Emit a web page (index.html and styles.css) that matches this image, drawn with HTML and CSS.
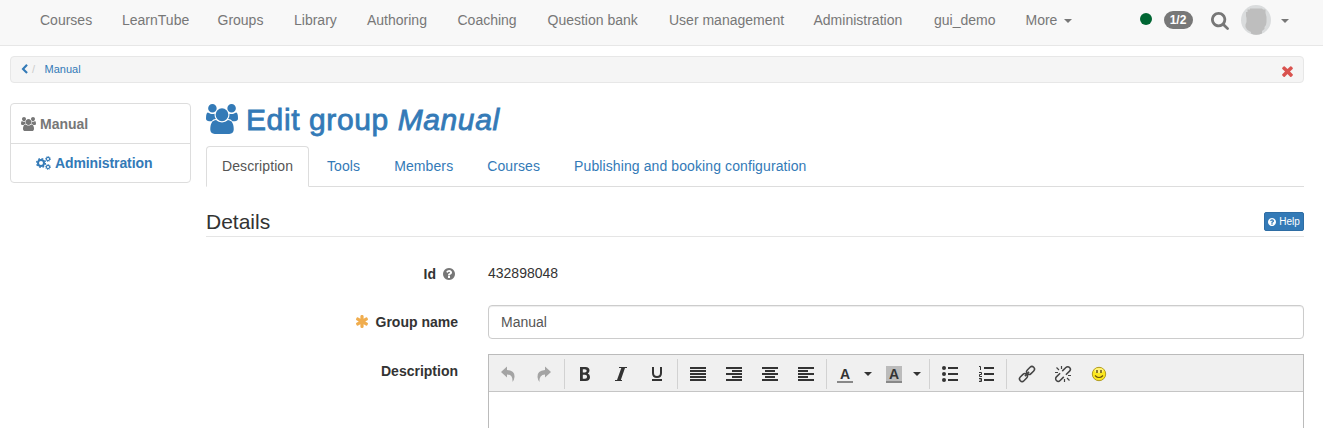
FILE: index.html
```html
<!DOCTYPE html>
<html lang="en">
<head>
<meta charset="utf-8">
<title>Edit group Manual</title>
<link rel="stylesheet" href="styles.css">
</head>
<body>
<svg class="defs" width="0" height="0">
  <symbol id="users" viewBox="0 0 1920 1792"><path d="M593 896q-162 5-265 128h-134q-82 0-138-40.5t-56-118.5q0-353 124-353 6 0 43.500 21t97.500 42.500 119 21.500q67 0 133-23-5 37-5 66 0 139 81 256zm1071 637q0 120-73 189.500t-194 69.500h-874q-121 0-194-69.500t-73-189.500q0-53 3.500-103.500t14-109 26.500-108.500 43-97.500 62-81 85.500-53.500 111.500-20q10 0 43 21.500t73 48 107 48 135 21.500 135-21.500 107-48 73-48 43-21.500q61 0 111.500 20t85.500 53.500 62 81 43 97.500 26.500 108.500 14 109 3.500 103.500zm-1024-1277q0 106-75 181t-181 75-181-75-75-181 75-181 181-75 181 75 75 181zm704 384q0 159-112.500 271.500t-271.500 112.500-271.500-112.500-112.500-271.500 112.500-271.500 271.500-112.500 271.500 112.500 112.500 271.500zm576 225q0 78-56 118.500t-138 40.500h-134q-103-123-265-128 81-117 81-256 0-29-5-66 66 23 133 23 59 0 119-21.500t97.500-42.500 43.500-21q124 0 124 353zm-128-609q0 106-75 181t-181 75-181-75-75-181 75-181 181-75 181 75 75 181z"/></symbol>
  <symbol id="question" viewBox="128 128 1536 1536"><path d="M1024 1376v-192q0-14-9-23t-23-9h-192q-14 0-23 9t-9 23v192q0 14 9 23t23 9h192q14 0 23-9t9-23zm256-672q0-88-55.500-163t-138.500-116-170-41q-243 0-371 213-15 24 8 42l132 100q7 6 19 6 16 0 25-12 53-68 86-92 34-24 86-24 48 0 85.500 26t37.500 59q0 38-20 61t-68 45q-63 28-115.500 86.500t-52.500 125.500v36q0 14 9 23t23 9h192q14 0 23-9t9-23q0-19 21.500-49.500t54.500-49.500q32-18 49-28.500t46-35 44.500-48 28-60.500 12.500-81zm384 192q0 209-103 385.500t-279.500 279.500-385.500 103-385.500-103-279.500-279.500-103-385.500 103-385.500 279.500-279.500 385.500-103 385.500 103 279.500 279.500 103 385.500z"/></symbol>
</svg>

<nav class="navbar">
  <div class="nav-main">
    <a>Courses</a><a>LearnTube</a><a>Groups</a><a>Library</a><a>Authoring</a><a>Coaching</a><a>Question bank</a><a>User management</a><a>Administration</a><a>gui_demo</a><a>More<i class="caret"></i></a>
  </div>
  <div class="nav-user">
    <span class="status"></span>
    <span class="badge">1/2</span>
    <svg class="search" viewBox="64 128 1664 1664"><path d="M1216 832q0-185-131.500-316.500t-316.500-131.500-316.500 131.500-131.500 316.500 131.500 316.500 316.500 131.500 316.500-131.500 131.500-316.500zm512 832q0 52-38 90t-90 38q-54 0-90-38l-343-342q-179 124-399 124-143 0-273.500-55.500t-225-150-150-225-55.500-273.500 55.500-273.500 150-225 225-150 273.500-55.500 273.500 55.500 225 150 150 225 55.500 273.500q0 220-124 399l343 343q37 37 37 90z"/></svg>
    <svg class="avatar" viewBox="0 0 30 30"><circle cx="15" cy="15" r="15" fill="#dadcdd"/><path d="M6.500 4.500H9V3.500H21L22 4.500H24.500V8L25.500 12V17L25 20L23.500 22V24L21 26V28.500Q15 31 10 28.500V27L8 26L6 24.500L4.500 22V19.500L5.500 17V13L5 11V7H6.500Z" fill="#bebebe"/></svg>
    <i class="caret"></i>
  </div>
</nav>

<div class="breadcrumb">
  <svg class="back" viewBox="300 0 1200 1700"><path d="M1427 301l-531 531 531 531q19 19 19 45t-19 45l-166 166q-19 19-45 19t-45-19l-742-742q-19-19-19-45t19-45l742-742q19-19 45-19t45 19l166 166q19 19 19 45t-19 45z"/></svg>
  <span class="slash">/</span>
  <a>Manual</a>
  <svg class="close" viewBox="302 238 1188 1316"><path d="M1490 1322q0 40-28 68l-136 136q-28 28-68 28t-68-28l-294-294-294 294q-28 28-68 28t-68-28l-136-136q-28-28-28-68t28-68l294-294-294-294q-28-28-28-68t28-68l136-136q28-28 68-28t68 28l294 294 294-294q28-28 68-28t68 28l136 136q28 28 28 68t-28 68l-294 294 294 294q28 28 28 68z"/></svg>
</div>

<div class="columns">
  <aside class="menu">
    <div class="menu-root"><svg class="menu-icon"><use href="#users"/></svg>Manual</div>
    <div class="menu-child">
      <svg class="menu-icon" viewBox="0 0 15 14"><g fill="none" stroke="currentColor"><circle cx="5" cy="7" r="3" stroke-width="2"/><circle cx="5" cy="7" r="4.400" stroke-width="1.400" stroke-dasharray="1.770 1.686"/><circle cx="12" cy="3" r="1.600" stroke-width="1.100"/><circle cx="12" cy="3" r="2.500" stroke-width=".9" stroke-dasharray="1 .963"/><circle cx="12" cy="11" r="1.600" stroke-width="1.100"/><circle cx="12" cy="11" r="2.500" stroke-width=".9" stroke-dasharray="1 .963"/></g></svg>Administration
    </div>
  </aside>

  <main>
    <h1><svg class="title-icon"><use href="#users"/></svg><span>Edit group <em>Manual</em></span></h1>
    <div class="tabs">
      <a class="tab active">Description</a><a class="tab">Tools</a><a class="tab">Members</a><a class="tab">Courses</a><a class="tab">Publishing and booking configuration</a>
    </div>
    <div class="legend"><h2>Details</h2><a class="help"><svg><use href="#question"/></svg>Help</a></div>

    <div class="row id-row"><label>Id<svg class="hint"><use href="#question"/></svg></label><span class="value">432898048</span></div>
    <div class="row name-row"><label><svg class="required" viewBox="180 128 1432 1536"><path d="M1546 1050q46 26 59.500 77.500t-12.500 97.500l-64 110q-26 46-77.500 59.500t-97.500-12.500l-266-153v307q0 52-38 90t-90 38h-128q-52 0-90-38t-38-90v-307l-266 153q-46 26-97.500 12.500t-77.500-59.500l-64-110q-26-46-12.500-97.500t59.500-77.500l266-154-266-154q-46-26-59.500-77.500t12.500-97.500l64-110q26-46 77.500-59.500t97.500 12.500l266 153v-307q0-52 38-90t90-38h128q52 0 90 38t38 90v307l266-153q46-26 97.500-12.500t77.500 59.500l64 110q26 46 12.500 97.500t-59.500 77.500l-266 154z"/></svg>Group name</label><div class="input">Manual</div></div>
    <div class="row desc-row"><label>Description</label>
      <div class="editor">
        <div class="toolbar">
          <div class="group">
            <svg class="tool off" viewBox="0 0 16 16"><path d="M1 6L7 .5V4Q15 4.500 14.500 11Q14.300 13.500 12.500 16Q13 8.500 7 8.500V11.500Z"/></svg>
            <svg class="tool off" viewBox="0 0 16 16"><path d="M15 6L9 .5V4Q1 4.500 1.500 11Q1.700 13.500 3.500 16Q3 8.500 9 8.500V11.500Z"/></svg>
          </div>
          <div class="group">
            <svg class="tool" viewBox="0 0 16 16"><path fill-rule="evenodd" d="M3 1H8.500Q12.500 1 12.500 4.500Q12.500 6.700 10.700 7.500Q13 8.300 13 11Q13 15 8.500 15H3ZM5.800 3.300V6.500H7.800Q9.700 6.500 9.700 4.800Q9.700 3.300 7.800 3.300ZM5.800 8.700V12.700H8Q10.100 12.700 10.100 10.700Q10.100 8.700 8 8.700Z"/></svg>
            <svg class="tool" viewBox="0 0 16 16"><path d="M6 1H14V2H12L7.800 14H9V15H2V14H4L8.300 2H6Z"/></svg>
            <svg class="tool" viewBox="0 0 16 16"><path d="M3 1H5V7Q5 10 8 10T11 7V1H13V7Q13 12 8 12T3 7ZM3 13H13V15H3Z"/></svg>
          </div>
          <div class="group">
            <svg class="tool" viewBox="0 0 16 16"><path d="M0 1H16V3H0ZM0 4H16V6H0ZM0 7H16V9H0ZM0 10H16V12H0ZM0 13H16V15H0Z"/></svg>
            <svg class="tool" viewBox="0 0 16 16"><path d="M0 1H16V3H0ZM6 4H16V6H6ZM0 7H16V9H0ZM6 10H16V12H6ZM0 13H16V15H0Z"/></svg>
            <svg class="tool" viewBox="0 0 16 16"><path d="M0 1H16V3H0ZM3 4H13V6H3ZM0 7H16V9H0ZM3 10H13V12H3ZM0 13H16V15H0Z"/></svg>
            <svg class="tool" viewBox="0 0 16 16"><path d="M0 1H16V3H0ZM0 4H10V6H0ZM0 7H16V9H0ZM0 10H10V12H0ZM0 13H16V15H0Z"/></svg>
          </div>
          <div class="group colors">
            <span class="color">A</span><i class="caret"></i><span class="color filled">A</span><i class="caret"></i>
          </div>
          <div class="group">
            <svg class="tool" viewBox="0 0 16 16"><circle cx="2" cy="2" r="2"/><circle cx="2" cy="8" r="2"/><circle cx="2" cy="14" r="2"/><path d="M6 1H16V3H6ZM6 7H16V9H6ZM6 13H16V15H6Z"/></svg>
            <svg class="tool" viewBox="0 0 16 16"><path d="M6 1H16V3H6ZM6 7H16V9H6ZM6 13H16V15H6Z"/><path fill="none" stroke="currentColor" d="M1 .500H2.500V4M1 6.500H3.500V8.500H1.500V10.500H4M1 12.500H3.500V15.500H1M1.500 14H3.500"/></svg>
          </div>
          <div class="group last">
            <svg class="tool" viewBox="0 0 16 16"><g class="link" transform="rotate(-45 8 8)"><rect x="-1.500" y="5.400" width="9" height="5.200" rx="2.600"/><rect x="8.500" y="5.400" width="9" height="5.200" rx="2.600"/><path d="M5 8H11"/></g></svg>
            <svg class="tool" viewBox="0 0 16 16"><g class="link"><g transform="rotate(-45 8 8)"><path d="M6.500 5.400H1.300A2.600 2.600 0 0 0 1.300 10.600H6.500M9.500 5.400H14.700A2.600 2.600 0 0 1 14.700 10.600H9.500"/></g><path stroke-width="1.200" d="M6.500 0V3M1.500 1.500L4 4M0 6.500H3M9.500 13V16M12 12L14.500 14.500M13 9.500H16"/></g></svg>
            <svg class="tool" viewBox="0 0 16 16"><circle cx="8" cy="8" r="6.700" fill="#fbe720" stroke="#b09a20"/><ellipse cx="8" cy="4.500" rx="4.500" ry="2.500" fill="#fff27a"/><path d="M6 4V7M10 4V7" stroke="#4e3b0b" stroke-width="1.300"/><path d="M4 9.500Q8 13.500 12 9.500" fill="none" stroke="#69500d" stroke-width="1.100"/></svg>
          </div>
        </div>
      </div>
    </div>
  </main>
</div>
</body>
</html>
```
FILE: styles.css
```css
* { box-sizing: border-box; }
body { margin: 0; height: 428px; overflow: hidden; background: #fff; color: #333; font: 14px/20px "Liberation Sans", Arial, sans-serif; }
svg { display: block; flex: none; fill: currentColor; }
.defs { display: none; }
.caret { display: inline-block; width: 0; height: 0; border: 4px solid transparent; border-top-color: currentColor; border-bottom: 0; }

.navbar { display: flex; height: 46px; padding: 10px 0 0 40px; background: #f8f8f8; border-bottom: 1px solid #e7e7e7; color: #777; }
.nav-main { display: grid; grid-template-columns: 82px 95.5px 76.5px 73px 90.5px 90px 121.5px 144.5px 120.5px 91.5px 60px; white-space: nowrap; }
.nav-main .caret { margin-left: 7px; vertical-align: 2px; }
.nav-user { display: flex; align-items: center; height: 20px; margin-left: 54px; }
.status { width: 12px; height: 12px; margin-top: -2px; border-radius: 50%; background: #063; }
.badge { width: 29px; height: 18px; margin-left: 12px; border-radius: 9px; background: #777; color: #fff; font-size: 12px; font-weight: bold; line-height: 18px; text-align: center; }
.search { width: 18px; height: 18px; margin-left: 18px; margin-top: 1px; }
.avatar { width: 30px; height: 30px; margin-left: 12px; }
.nav-user .caret { margin-left: 10px; margin-top: 1px; }

.breadcrumb { display: flex; height: 27px; width: 1294px; margin: 10px 0 20px 10px; padding: 0 10px; border: 1px solid #e7e7e7; border-radius: 4px; background: #f5f5f5; color: #337ab7; font-size: 11px; line-height: 25px; }
.back { width: 7px; height: 10px; margin-top: 7px; }
.slash { width: 3px; margin-left: 4px; color: #ccc; }
.breadcrumb a { margin-left: 9.5px; }
.close { width: 11px; height: 12px; margin: 8px 0 0 auto; color: #d9534f; }

.columns { display: flex; align-items: flex-start; gap: 15px; margin-left: 10px; }
.menu { width: 181px; height: 80px; border: 1px solid #ddd; border-radius: 4px; font-weight: bold; }
.menu-root, .menu-child { display: flex; align-items: center; gap: 4px; height: 40px; padding-left: 10px; color: #777; }
.menu-root { border-bottom: 1px solid #ddd; padding-top: 1px; }
.menu-child { height: 38px; padding-left: 25px; color: #337ab7; letter-spacing: -.1px; }
.menu-icon { width: 15px; height: 14px; }

main { width: 1098px; }
h1 { display: flex; gap: 8px; height: 43px; margin: 0; color: #337ab7; font-size: 30px; font-weight: 400; line-height: 33px; white-space: nowrap; letter-spacing: .6px; -webkit-text-stroke: .8px #337ab7; }
.title-icon { width: 32px; height: 30px; margin-top: 1px; stroke: none; -webkit-text-stroke: 0; }
.tabs { display: flex; gap: 2px; height: 41px; border-bottom: 1px solid #ddd; white-space: nowrap; letter-spacing: .1px; }
.tab { height: 41px; padding: 9px 15px; border: 1px solid transparent; color: #337ab7; line-height: 20px; }
.tab.active { width: 103px; border-color: #ddd #ddd #fff; border-radius: 4px 4px 0 0; background: #fff; color: #555; }
.legend { display: flex; justify-content: space-between; height: 50px; padding-top: 22px; border-bottom: 1px solid #e5e5e5; }
h2 { margin: 0; font-size: 21px; line-height: 26px; font-weight: 400; }
.help { display: flex; align-items: center; justify-content: center; gap: 3px; width: 40px; height: 19px; margin-top: 3px; border: 1px solid #2e6da4; border-radius: 2px; background: #337ab7; color: #fff; font-size: 10px; line-height: 17px; }
.help svg { width: 8px; height: 8px; }

.row { display: flex; gap: 30px; }
.row label { display: flex; justify-content: flex-end; width: 252px; font-weight: bold; line-height: 20px; white-space: nowrap; }
.id-row { height: 42px; margin-top: 26px; }
.id-row label { padding: 1px 3px 0 0; }
.hint { width: 12px; height: 12px; margin: 4px 0 0 7px; color: #777; }
.name-row { height: 34px; }
.name-row label { padding-top: 7px; }
.required { width: 12px; height: 13px; margin: 3px 8px 0 0; color: #f0ad4e; }
.input { width: 816px; height: 34px; padding: 6px 12px; border: 1px solid #ccc; border-radius: 4px; box-shadow: inset 0 1px 1px rgba(0,0,0,.075); color: #555; }
.desc-row { margin-top: 15px; }
.desc-row label { padding-top: 7px; }
.editor { width: 816px; height: 90px; border: 1px solid #bbb; border-bottom: 0; }
.toolbar { display: flex; height: 37px; padding: 4px 1px 2px; border-bottom: 1px solid #c5c5c5; background: #f0f0f0; }
.group { display: flex; align-items: center; height: 30px; margin-right: 2px; border-right: 1px solid #d2d2d2; padding-right: 2px; }
.group.last { border: 0; }
.tool { width: 36px; height: 16px; padding: 0 10px; overflow: visible; }
.tool.off { color: #a4a4a4; }
.link { fill: none; stroke: #444; stroke-width: 1.5; }
.colors { padding-left: 8px; padding-right: 8px; }
.color { width: 16px; height: 17px; margin-top: 1px; border-bottom: 2px solid #888; font: bold 14px/17px "Liberation Sans", sans-serif; text-align: center; }
.color.filled { margin-left: 14px; background: #bbb; }
.colors .caret { margin-left: 11px; }
```
